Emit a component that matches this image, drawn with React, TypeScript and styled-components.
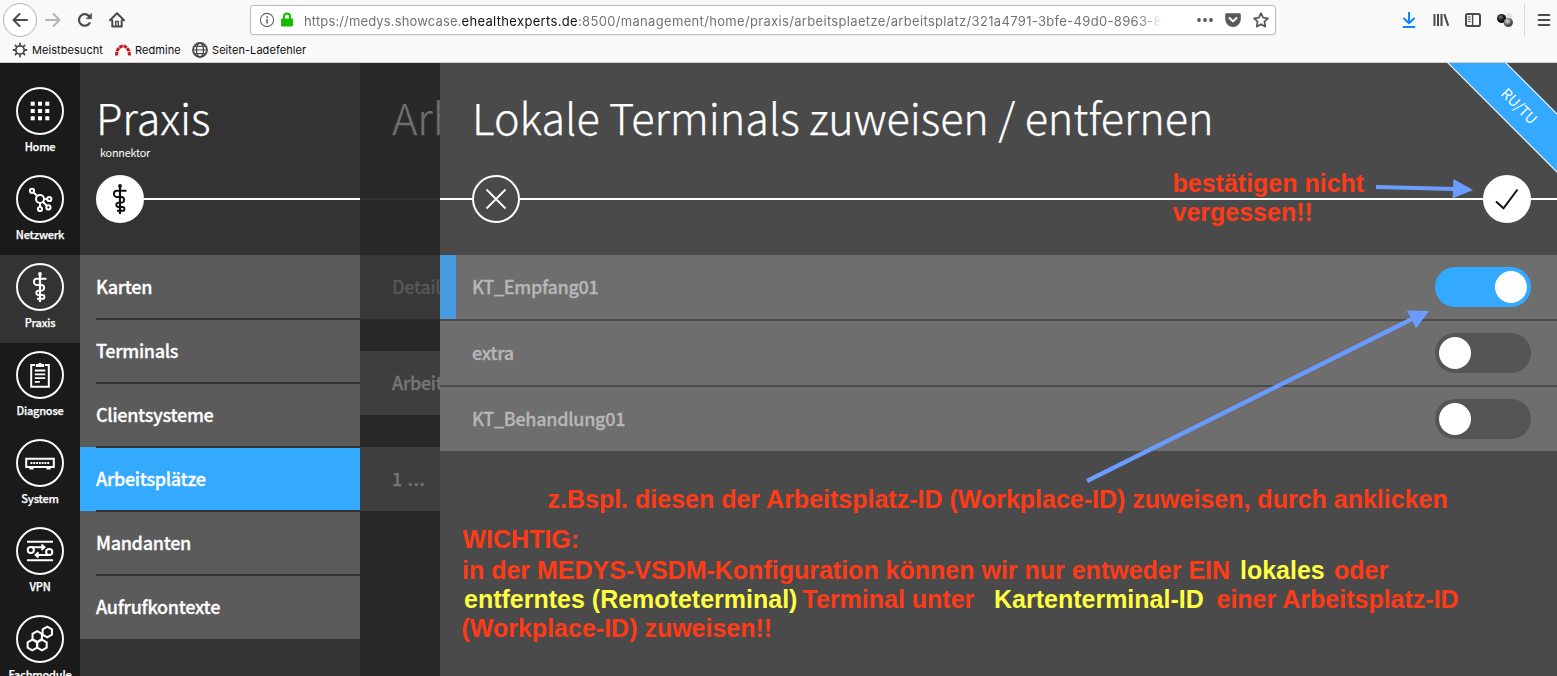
import React from "react";
import styled, { createGlobalStyle, css } from "styled-components";

const sans = `"Noto Sans CJK SC", "Open Sans", sans-serif`;
const ui = `Inter, "Liberation Sans", sans-serif`;

const GlobalStyle = createGlobalStyle`
  *, *::before, *::after { box-sizing: border-box; }
  html, body { margin: 0; padding: 0; background: #4a4a4a; }
  body { overflow: hidden; font-family: ${sans}; }
`;

const Window = styled.div`
  position: relative;
  display: flex;
  flex-direction: column;
  width: 1557px;
  height: 676px;
  overflow: hidden;
`;

/* ---------- browser chrome ---------- */

const Chrome = styled.header`
  flex: none;
  height: 63px;
  background: #f9f9fa;
  border-bottom: 1px solid #d0d0d0;
  font-family: ${ui};
`;

const Toolbar = styled.div`
  display: flex;
  align-items: center;
  height: 40px;
`;

const NavGroup = styled.div`
  display: flex;
  align-items: center;
  width: 250px;
  padding-left: 3px;
`;

const BackButton = styled.div`
  display: flex;
  align-items: center;
  justify-content: center;
  width: 34px;
  height: 34px;
  border: 1px solid #b4b4b4;
  border-radius: 50%;
  background: #fff;
`;

const NavIcon = styled.div<{ $gap: number }>`
  display: flex;
  width: 16px;
  height: 16px;
  margin-left: ${(p) => p.$gap}px;
`;

const UrlBar = styled.div`
  display: flex;
  align-items: center;
  width: 1026px;
  height: 30px;
  padding: 0 6px 0 8px;
  border: 1px solid #bcbcbc;
  border-radius: 3px;
  background: #fff;
  box-shadow: 0 1px 3px rgba(0, 0, 0, 0.05);
`;

const Lock = styled.svg`
  flex: none;
  margin-left: 5px;
`;

const Url = styled.div`
  width: 860px;
  margin-left: 10px;
  overflow: hidden;
  white-space: nowrap;
  font-size: 13px;
  letter-spacing: 0.33px;
  line-height: 20px;
  padding-top: 1px;
  color: #737373;
  mask-image: linear-gradient(to right, #000 835px, transparent 858px);
`;

const UrlScheme = styled.span`
  letter-spacing: 0.14px;
`;

const UrlHost = styled.span`
  color: #111;
`;

const UrlActions = styled.div`
  display: flex;
  align-items: center;
  gap: 12px;
  margin-left: auto;
  svg { flex: none; }
`;

const ToolIcons = styled.div`
  display: flex;
  align-items: center;
  gap: 16px;
  margin-left: 125px;
`;

const Divider = styled.div`
  width: 1px;
  height: 34px;
  margin: 0 -5px 0 -5px;
  background: #d8d8da;
`;

const Bookmarks = styled.div`
  display: flex;
  align-items: center;
  height: 20px;
  padding-left: 12px;
`;

const Bookmark = styled.div<{ $w: number; $ls: number }>`
  display: flex;
  align-items: center;
  gap: 4px;
  width: ${(p) => p.$w}px;
  white-space: nowrap;
  font-size: 11px;
  letter-spacing: ${(p) => p.$ls}px;
  color: #0c0c0d;
`;

/* ---------- application ---------- */

const AppBody = styled.div`
  display: flex;
  flex: 1;
  min-height: 0;
`;

const Sidebar = styled.nav`
  flex: none;
  width: 80px;
  padding-top: 16px;
  background: #1a1a1a;
`;

const SideItem = styled.div<{ $active?: boolean }>`
  display: flex;
  flex-direction: column;
  align-items: center;
  height: 88px;
  padding-top: 8px;
  background: ${(p) => (p.$active ? "#333" : "transparent")};
`;

const SideLabel = styled.span`
  margin-top: 2px;
  font-size: 11px;
  font-weight: 500;
  line-height: 18px;
  letter-spacing: -0.2px;
  -webkit-text-stroke: 0.25px #fff;
  color: #fff;
  white-space: nowrap;
`;

const Round = styled.div<{ $solid?: boolean }>`
  display: flex;
  align-items: center;
  justify-content: center;
  flex: none;
  width: 48px;
  height: 48px;
  border: 2px solid #fff;
  border-radius: 50%;
  background: ${(p) => (p.$solid ? "#fff" : "transparent")};
  color: ${(p) => (p.$solid ? "#111" : "#fff")};
  svg { flex: none; }
`;

const Panel = styled.section<{ $w?: number; $bg: string }>`
  position: relative;
  display: flex;
  flex-direction: column;
  ${(p) => (p.$w ? css`flex: none; width: ${p.$w}px;` : css`flex: 1;`)}
  min-width: 0;
  overflow: hidden;
  background: ${(p) => p.$bg};
`;

const PanelHead = styled.div<{ $pl: number }>`
  display: flex;
  flex-direction: column;
  height: 112px;
  padding: 25px 0 0 ${(p) => p.$pl}px;
`;

const Title = styled.h1<{ $color?: string }>`
  margin: 0;
  font-size: 43.2px;
  font-weight: 300;
  line-height: 56px;
  letter-spacing: -0.08px;
  color: ${(p) => p.$color || "#fff"};
  -webkit-text-stroke: 0.25px ${(p) => p.$color || "#fff"};
  white-space: nowrap;
`;

const Subtitle = styled.div`
  padding-left: 4px;
  font-size: 10.8px;
  line-height: 16px;
  letter-spacing: -0.2px;
  color: #fff;
`;

const Track = styled.div`
  display: flex;
  align-items: center;
  height: 48px;
  margin-bottom: 32px;
`;

const Rail = styled.div<{ $w?: number; $color?: string }>`
  ${(p) => (p.$w ? css`flex: none; width: ${p.$w}px;` : css`flex: 1;`)}
  height: 2px;
  background: ${(p) => p.$color || "#fff"};
`;

const Gap = styled.div`
  width: 16px;
`;

const itemText = css`
  font-size: 18px;
  font-weight: 500;
  letter-spacing: -0.3px;
  white-space: nowrap;
`;

const Menu = styled.div`
  display: flex;
  flex-direction: column;
`;

const MenuItem = styled.div<{ $active?: boolean }>`
  position: relative;
  height: 64px;
  padding-left: 16px;
  background: ${(p) => (p.$active ? "#33a9ff" : "#5b5b5b")};
  ${itemText}
  line-height: 63px;
  color: #fff;
  -webkit-text-stroke: 0.3px #fff;
  &:not(:first-child)::before {
    content: "";
    position: absolute;
    top: -1px;
    left: 16px;
    right: 0;
    height: 2px;
    background: #333;
  }
`;

const DimItem = styled.div<{ $bg: string; $color: string; $ls?: number }>`
  height: 64px;
  margin-bottom: 32px;
  padding-left: 32px;
  background: ${(p) => p.$bg};
  ${itemText}
  letter-spacing: ${(p) => p.$ls ?? -0.3}px;
  line-height: 63px;
  color: ${(p) => p.$color};
  -webkit-text-stroke: 0.3px ${(p) => p.$color};
`;

const TerminalList = styled.div`
  display: flex;
  flex-direction: column;
  gap: 2px;
`;

const TerminalRow = styled.div<{ $on?: boolean }>`
  display: flex;
  align-items: center;
  justify-content: space-between;
  height: 64px;
  padding: 0 26px 0 16px;
  border-left: 16px solid ${(p) => (p.$on ? "#4a9ae3" : "#6e6e6e")};
  background: #6e6e6e;
`;

const TerminalName = styled.span`
  ${itemText}
  line-height: 62px;
  padding-bottom: 2px;
  color: #b7b7b7;
  -webkit-text-stroke: 0.3px #b7b7b7;
`;

const Toggle = styled.div<{ $on?: boolean }>`
  display: flex;
  justify-content: ${(p) => (p.$on ? "flex-end" : "flex-start")};
  width: 96px;
  height: 40px;
  padding: 4px;
  border-radius: 20px;
  background: ${(p) => (p.$on ? "#33a9ff" : "#555")};
  &::after {
    content: "";
    width: 32px;
    height: 32px;
    border-radius: 50%;
    background: #fff;
  }
`;

const Ribbon = styled.div`
  position: absolute;
  left: 979px;
  top: 21px;
  width: 200px;
  height: 42px;
  border: 1px solid #fff;
  background: #33a9ff;
  transform: rotate(45deg);
  font-size: 14.5px;
  line-height: 40px;
  text-align: center;
  text-indent: 2px;
  color: #fff;
`;

/* ---------- hand-placed notes over the page ---------- */

const Note = styled.div<{ $x: number; $y: number; $yellow?: boolean }>`
  position: absolute;
  left: ${(p) => p.$x}px;
  top: ${(p) => p.$y}px;
  font-family: "Liberation Sans", Arial, sans-serif;
  font-size: 25px;
  font-weight: 700;
  line-height: 29px;
  color: ${(p) => (p.$yellow ? "#ffff40" : "#ff3b17")};
  white-space: nowrap;
`;

const Arrows = styled.svg`
  position: absolute;
  left: 0;
  top: 0;
  pointer-events: none;
`;

const Ico = ({ children }: { children: React.ReactNode }) => (
  <svg width="44" height="44" viewBox="0 0 44 44" fill="none" stroke="currentColor" strokeWidth="2">
    {children}
  </svg>
);

const Staff = () => (
  <Ico>
    <path d="M22 9.5V37" strokeWidth="2.2" />
    <circle cx="22" cy="9" r="1.9" fill="currentColor" stroke="none" />
    <path d="M28.5 13.8H19a3 3 0 0 0 0 6.2H24a2.9 2.9 0 0 1 0 5.6h-3.5a2.2 2.2 0 0 0 0 4.4h4a1.9 1.9 0 0 1 0 3.8H19" strokeWidth="1.9" />
  </Ico>
);

const GridIcon = () => (
  <Ico>
    {[0, 1, 2].map((r) => [0, 1, 2].map((c) => (
      <rect key={`${r}${c}`} x={12.7 + c * 7.3} y={12.7 + r * 7.3} width="4" height="4" fill="currentColor" stroke="none" />
    )))}
  </Ico>
);

const NetIcon = () => (
  <Ico>
    <circle cx="22" cy="22" r="4" />
    <circle cx="14" cy="13.8" r="2.1" />
    <circle cx="31.3" cy="22" r="2.1" />
    <circle cx="30.4" cy="30.4" r="2.1" />
    <circle cx="22" cy="32" r="2.1" />
    <path d="M15.6 15.4l3.5 3.6M26 22h3M25 25l3.8 3.8M22 26v4" />
  </Ico>
);

const ClipIcon = () => (
  <Ico>
    <path d="M17 12H13.2V33.8h17.6V12H27" />
    <path d="M17.8 14v-3h2.4a2 2 0 0 1 3.6 0h2.4v3z" fill="currentColor" stroke="none" />
    <path d="M16.8 17.5h10.5M16.8 21.3h10.5M16.8 25.1h10.5M16.8 28.9h5" strokeWidth="1.8" />
  </Ico>
);

const RouterIcon = () => (
  <Ico>
    <path d="M8.2 17.8h27.6v8.2H8.2z" />
    <path d="M12.5 21.9h19" strokeDasharray="1.9 0.9" />
    <path d="M11.5 27.5h4M28.5 27.5h4" />
  </Ico>
);

const VpnIcon = () => (
  <Ico>
    <path d="M9 12.7h26M9 31.2h26" />
    <circle cx="12.8" cy="21" r="3.1" />
    <circle cx="31.2" cy="23" r="3.1" />
    <path d="M14 18.2h12M23.5 15.5l2.9 2.7-2.9 2.7M30 25.9H18M20.5 23.2l-2.9 2.7 2.9 2.7" />
  </Ico>
);

const hex = (cx: number, cy: number, r = 5.4) =>
  Array.from({ length: 6 }, (_, i) => {
    const a = (Math.PI / 3) * i + Math.PI / 6;
    return `${(cx + r * Math.cos(a)).toFixed(2)},${(cy + r * Math.sin(a)).toFixed(2)}`;
  }).join(" ");

const HexIcon = () => (
  <Ico>
    <polygon points={hex(14.3, 28)} />
    <polygon points={hex(24, 28)} />
    <polygon points={hex(19.2, 19.5)} />
    <polygon points={hex(29.3, 15)} />
  </Ico>
);

const sideItems = [
  { label: "Home", icon: <GridIcon /> },
  { label: "Netzwerk", icon: <NetIcon /> },
  { label: "Praxis", icon: <Staff />, active: true },
  { label: "Diagnose", icon: <ClipIcon /> },
  { label: "System", icon: <RouterIcon /> },
  { label: "VPN", icon: <VpnIcon /> },
  { label: "Fachmodule", icon: <HexIcon /> },
];

const menu = ["Karten", "Terminals", "Clientsysteme", "Arbeitsplätze", "Mandanten", "Aufrufkontexte"];

const terminals = [
  { name: "KT_Empfang01", on: true },
  { name: "extra", on: false },
  { name: "KT_Behandlung01", on: false },
];

const Glyph = ({ children, color = "#4a4a4c", sw = 2 }: { children: React.ReactNode; color?: string; sw?: number }) => (
  <svg width="16" height="16" viewBox="0 0 16 16" fill="none" stroke={color} strokeWidth={sw} strokeLinecap="round" strokeLinejoin="round">
    {children}
  </svg>
);

const BrowserChrome = () => (
  <Chrome>
    <Toolbar>
      <NavGroup>
        <BackButton>
          <Glyph><path d="M15 8H1.5M7.5 2L1.5 8l6 6" /></Glyph>
        </BackButton>
        <NavIcon $gap={8}><Glyph color="#b4b4b5"><path d="M1 8h13.5M8.5 2l6 6-6 6" /></Glyph></NavIcon>
        <NavIcon $gap={16}>
          <Glyph><path d="M12.6 11.2A5.8 5.8 0 1 1 12.2 4.2" strokeWidth="2.2" /><path d="M14.6 1.5v5.2H9.4z" fill="#4a4a4c" strokeWidth="0.6" /></Glyph>
        </NavIcon>
        <NavIcon $gap={16}>
          <Glyph><path d="M1 8.3L8 1.3l7 7M3.3 8.5v6h9.4v-6" /><path d="M6.7 14V9.5h2.6V14" strokeWidth="1.4" /></Glyph>
        </NavIcon>
      </NavGroup>
      <UrlBar>
        <Glyph sw={1.1} color="#666"><circle cx="8" cy="8" r="6.6" /><path d="M8 7.5V11" strokeWidth="1.6" /><circle cx="8" cy="5" r=".5" strokeWidth="1" /></Glyph>
        <Lock width="14" height="16" viewBox="0 0 14 16">
          <path d="M4 7V4.6a3 3 0 0 1 6 0V7" fill="none" stroke="#12bc00" strokeWidth="2" />
          <rect x="1" y="6.5" width="12" height="8" rx="1" fill="#12bc00" />
        </Lock>
        <Url>
          <UrlScheme>https://medys.showcase.</UrlScheme>
          <UrlHost>ehealthexperts.de</UrlHost>
          :8500/management/home/praxis/arbeitsplaetze/arbeitsplatz/321a4791-3bfe-49d0-8963-8e
        </Url>
        <UrlActions>
          <Glyph><g fill="#5a5a5c" stroke="none"><circle cx="2" cy="8" r="1.9" /><circle cx="8" cy="8" r="1.9" /><circle cx="14" cy="8" r="1.9" /></g></Glyph>
          <Glyph color="#fff"><path d="M1.6 1.2h12.8a1.4 1.4 0 0 1 1.4 1.4v4.6a7.8 7.8 0 0 1-15.6 0V2.6A1.4 1.4 0 0 1 1.6 1.2z" fill="#5a5a5c" stroke="none" /><path d="M4.5 6L8 9.4 11.5 6" /></Glyph>
          <Glyph color="#5a5a5c" sw={1.8}><path d="M8 1.2l2.1 4.5 4.8.6-3.5 3.4.9 4.9L8 12.2l-4.3 2.4.9-4.9L1.1 6.3l4.8-.6z" /></Glyph>
        </UrlActions>
      </UrlBar>
      <ToolIcons>
        <Glyph color="#0a84ff"><path d="M8 .8v10M3 6.5l5 4.8 5-4.8M2.5 15h11" /></Glyph>
        <Glyph><path d="M1.5 2v12M5 2v12M8.5 2v12M11.3 2.2l4 11.6" strokeLinecap="butt" /></Glyph>
        <Glyph><rect x="1" y="2" width="14" height="12" rx="1.8" /><path d="M7.6 2v12" strokeWidth="1.4" /><path d="M3.2 5h2M3.2 7.3h2M3.2 9.6h2" strokeWidth="1" /></Glyph>
        <svg width="16" height="16" viewBox="0 0 16 16">
          <defs>
            <radialGradient id="dark" cx=".4" cy=".35"><stop offset="0" stopColor="#888" /><stop offset=".6" stopColor="#222" /><stop offset="1" stopColor="#111" /></radialGradient>
            <radialGradient id="mid" cx=".4" cy=".35"><stop offset="0" stopColor="#ddd" /><stop offset=".7" stopColor="#777" /><stop offset="1" stopColor="#444" /></radialGradient>
          </defs>
          <circle cx="12" cy="4.5" r="3.5" fill="#e4e4e4" />
          <circle cx="4.6" cy="6.5" r="4.6" fill="url(#dark)" />
          <circle cx="11.3" cy="10.5" r="4.6" fill="url(#mid)" />
        </svg>
        <Divider />
        <Glyph><path d="M2.7 3h10.6M2.7 8h10.6M2.7 13h10.6" /></Glyph>
      </ToolIcons>
    </Toolbar>
    <Bookmarks>
      <Bookmark $w={103} $ls={0.06}>
        <svg width="16" height="16" viewBox="0 0 16 16" fill="none" stroke="#4a4a4c">
          <circle cx="8" cy="8" r="4.2" strokeWidth="1.8" />
          <path d="M8 .8v2.6M8 12.6v2.6M.8 8h2.6M12.6 8h2.6M2.9 2.9l1.9 1.9M11.2 11.2l1.9 1.9M2.9 13.1l1.9-1.9M11.2 4.8l1.9-1.9" strokeWidth="1.8" />
        </svg>
        Meistbesucht
      </Bookmark>
      <Bookmark $w={77} $ls={0.08}>
        <svg width="16" height="16" viewBox="0 0 16 16" fill="none" stroke="#c4161c" strokeWidth="3">
          <path d="M1.8 13.5a8.5 8.5 0 0 1 3.2-8.3 4.6 4.6 0 0 1 6 0 8.5 8.5 0 0 1 3.2 8.3" strokeDasharray="3.6 .7" />
        </svg>
        Redmine
      </Bookmark>
      <Bookmark $w={130} $ls={0.07}>
        <svg width="16" height="16" viewBox="0 0 16 16" fill="none" stroke="#4a4a4c" strokeWidth="1.3">
          <circle cx="8" cy="8" r="7" strokeWidth="1.8" />
          <ellipse cx="8" cy="8" rx="3.6" ry="7" />
          <path d="M1 8h14M2.5 4.3h11M2.5 11.7h11" strokeWidth="1.2" />
        </svg>
        Seiten-Ladefehler
      </Bookmark>
    </Bookmarks>
  </Chrome>
);

export default function App() {
  return (
    <Window>
      <GlobalStyle />
      <BrowserChrome />
      <AppBody>
        <Sidebar>
          {sideItems.map((i) => (
            <SideItem key={i.label} $active={i.active}>
              <Round>{i.icon}</Round>
              <SideLabel>{i.label}</SideLabel>
            </SideItem>
          ))}
        </Sidebar>

        <Panel $w={280} $bg="#333">
          <PanelHead $pl={16}>
            <Title>Praxis</Title>
            <Subtitle>konnektor</Subtitle>
          </PanelHead>
          <Track>
            <Gap />
            <Round $solid><Staff /></Round>
            <Rail />
          </Track>
          <Menu>
            {menu.map((m) => (
              <MenuItem key={m} $active={m === "Arbeitsplätze"}>{m}</MenuItem>
            ))}
          </Menu>
        </Panel>

        <Panel $w={80} $bg="#292929">
          <PanelHead $pl={32}>
            <Title $color="#6e6e6e">Arb</Title>
          </PanelHead>
          <Track><Rail $color="#333" /></Track>
          <DimItem $bg="#383838" $color="#565656">Detail</DimItem>
          <DimItem $bg="#3e3e3e" $color="#767676">Arbeit</DimItem>
          <DimItem $bg="#3e3e3e" $color="#767676" $ls={0.6}>1 ...</DimItem>
        </Panel>

        <Panel $bg="#4a4a4a">
          <PanelHead $pl={32}>
            <Title>Lokale Terminals zuweisen / entfernen</Title>
          </PanelHead>
          <Track>
            <Rail $w={32} />
            <Round>
              <Ico><path d="M12.5 12.5l19 19M31.5 12.5l-19 19" strokeWidth="1.8" /></Ico>
            </Round>
            <Rail />
            <Round $solid>
              <Ico><path d="M11 24.5l7.5 6.8L32.5 12.5" strokeWidth="2" /></Ico>
            </Round>
            <Rail $w={26} />
          </Track>
          <TerminalList>
            {terminals.map((t) => (
              <TerminalRow key={t.name} $on={t.on}>
                <TerminalName>{t.name}</TerminalName>
                <Toggle $on={t.on} />
              </TerminalRow>
            ))}
          </TerminalList>
          <Ribbon>RU/TU</Ribbon>
        </Panel>
      </AppBody>

      <Note $x={1172.5} $y={169}>bestätigen nicht<br />vergessen!!</Note>
      <Note $x={547.5} $y={485}>z.Bspl. diesen der Arbeitsplatz-ID (Workplace-ID) zuweisen, durch anklicken</Note>
      <Note $x={462.5} $y={525}>WICHTIG:</Note>
      <Note $x={462} $y={556}>in der MEDYS-VSDM-Konfiguration können wir nur entweder EIN</Note>
      <Note $x={1240} $y={556} $yellow>lokales</Note>
      <Note $x={1334} $y={556}>oder</Note>
      <Note $x={464} $y={585} $yellow>entferntes (Remoteterminal)</Note>
      <Note $x={802.5} $y={585}>Terminal unter</Note>
      <Note $x={994} $y={585} $yellow>Kartenterminal-ID</Note>
      <Note $x={1216.5} $y={585}>einer Arbeitsplatz-ID</Note>
      <Note $x={461.5} $y={614}>(Workplace-ID) zuweisen!!</Note>

      <Arrows width="1557" height="676" viewBox="0 0 1557 676" fill="#6b9bff" stroke="#6b9bff">
        <path d="M1376 187L1455 189" strokeWidth="4" />
        <path d="M1453.5 179L1473 190L1452.5 198.5z" stroke="none" />
        <path d="M1087 481L1412 319" strokeWidth="4.2" />
        <path d="M1407 310.5L1429 311L1416 328.5z" stroke="none" />
      </Arrows>
    </Window>
  );
}
